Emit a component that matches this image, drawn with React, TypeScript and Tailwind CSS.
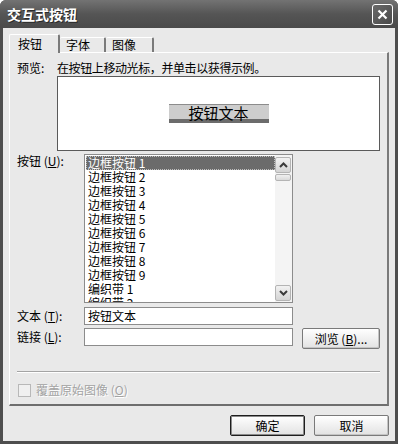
import React from "react"

const items = [
  "边框按钮 1",
  "边框按钮 2",
  "边框按钮 3",
  "边框按钮 4",
  "边框按钮 5",
  "边框按钮 6",
  "边框按钮 7",
  "边框按钮 8",
  "边框按钮 9",
  "编织带 1",
  "编织带 2",
]

function Key({ label, k }: { label: string; k: string }) {
  return (
    <span className="whitespace-nowrap">
      {label} (<span className="underline">{k}</span>):
    </span>
  )
}

function Arrow({ up }: { up?: boolean }) {
  return (
    <svg width="9" height="6" viewBox="0 0 9 6">
      <path d={up ? "M1 5 L4.5 1.5 L8 5" : "M1 1 L4.5 4.5 L8 1"} fill="none" stroke="#3a3a3a" strokeWidth="2" />
    </svg>
  )
}

export default function App() {
  return (
    <div
      className="w-[398px] h-[444px] bg-[#4e4e4e] flex flex-col rounded-t-[6px] overflow-hidden text-[12px] text-black"
      style={{ fontFamily: '"Noto Sans CJK SC", "Noto Sans", sans-serif' }}
    >
      {/* Title bar */}
      <div className="h-[28px] shrink-0 flex items-center justify-between pl-[7px] pr-[5px] bg-gradient-to-b from-[#737373] via-[#555555] to-[#4a4a4a]">
        <span className="text-white font-bold text-[14px] leading-none [text-shadow:1px_1px_0_#2a2a2a]">交互式按钮</span>
        <div className="w-[21px] h-[21px] border border-white rounded-[3px] bg-gradient-to-br from-[#6a6a6a] to-[#4a4a4a] flex items-center justify-center">
          <svg width="11" height="11" viewBox="0 0 11 11">
            <path d="M1.5 1.5 L9.5 9.5 M9.5 1.5 L1.5 9.5" stroke="white" strokeWidth="2.2" />
          </svg>
        </div>
      </div>

      {/* Body */}
      <div className="flex-1 mx-[3px] mb-[3px] bg-[#e9e9e9] px-[6px] pt-[6px] flex flex-col">
        {/* Tabs */}
        <div className="h-[18px] flex items-end leading-[14px]">
          <div className="relative z-10 h-[19px] w-[51px] -mb-[1px] bg-[#e9e9e9] border-l border-t border-white border-r-2 border-r-[#7a7a7a] rounded-t-[2px] pl-[8px] pt-[2px]">
            按钮
          </div>
          <div className="h-[15px] w-[46px] border-t border-white border-r-2 border-r-[#7a7a7a] rounded-t-[2px] pl-[6px] pt-0">
            字体
          </div>
          <div className="h-[15px] w-[48px] border-t border-white border-r-2 border-r-[#7a7a7a] rounded-t-[2px] pl-[6px] pt-0">
            图像
          </div>
        </div>

        {/* Panel */}
        <div className="h-[354px] border-l border-t border-white border-r-2 border-r-[#7a7a7a] border-b-2 border-b-[#6e6e6e] px-[7px] pt-[8px] flex flex-col leading-[14px]">
          <div className="flex">
            <span className="w-[40px] shrink-0">预览:</span>
            <span className="tracking-[-0.4px]">在按钮上移动光标，并单击以获得示例。</span>
          </div>
          <div className="ml-[40px] mt-[1px] h-[75px] bg-white border border-[#5a5a5a] flex items-center justify-center">
            <div className="w-[100px] h-[19px] bg-[#cdcdcd] border-t border-[#8c8c8c] border-b-[4px] border-b-[#6c6c6c] flex items-center justify-center text-[15px] leading-none">
              按钮文本
            </div>
          </div>

          {/* List row */}
          <div className="flex mt-[3px]">
            <div className="w-[67px] shrink-0 pt-0">
              <Key label="按钮" k="U" />
            </div>
            <div className="w-[209px] h-[149px] bg-white border border-[#8c8c8c] flex overflow-hidden">
              <div className="flex-1 pt-[1px] pl-[1px] flex flex-col">
                {items.map((it, i) => (
                  <div
                    key={it}
                    className={`h-[14px] shrink-0 pl-[2px] leading-[14px] whitespace-nowrap ${
                      i === 0 ? "bg-[#6b6b6b] text-white outline outline-1 outline-dotted outline-[#bdbdbd] -outline-offset-1" : ""
                    }`}
                  >
                    {it}
                  </div>
                ))}
              </div>
              <div className="w-[17px] shrink-0 bg-[#f4f4f4] flex flex-col pt-[2px] pb-[1px] pr-[1px]">
                <div className="h-[16px] rounded-[2px] border border-[#b4b4b4] bg-gradient-to-b from-[#f2f2f2] to-[#d4d4d4] flex items-center justify-center">
                  <Arrow up />
                </div>
                <div className="h-[7px] mt-[1px] rounded-[2px] border border-[#b4b4b4] bg-gradient-to-b from-[#f0f0f0] to-[#dadada]" />
                <div className="flex-1" />
                <div className="h-[16px] rounded-[2px] border border-[#b4b4b4] bg-gradient-to-b from-[#f2f2f2] to-[#d4d4d4] flex items-center justify-center">
                  <Arrow />
                </div>
              </div>
            </div>
          </div>

          {/* Text row */}
          <div className="flex items-center mt-[4px]">
            <div className="w-[67px] shrink-0">
              <Key label="文本" k="T" />
            </div>
            <div className="w-[209px] h-[18px] bg-white border border-[#8c8c8c] pl-[3px] leading-[16px]">按钮文本</div>
          </div>

          {/* Link row */}
          <div className="flex items-start mt-[3px]">
            <div className="w-[67px] shrink-0 pt-[2px]">
              <Key label="链接" k="L" />
            </div>
            <div className="w-[209px] h-[18px] bg-white border border-[#8c8c8c]" />
            <button className="ml-[9px] w-[78px] h-[21px] rounded-[2px] border border-[#7a7a7a] bg-gradient-to-b from-white to-[#e2e2e2] shadow-[inset_-1px_-1px_0_#c4c4c4] flex items-center justify-center leading-none">
              <span>
                浏览 (<span className="underline">B</span>)...
              </span>
            </button>
          </div>

          {/* Separator */}
          <div className="mt-[22px] h-[2px] border-t border-[#a4a4a4] border-b border-b-white" />

          {/* Checkbox row */}
          <div className="flex items-center mt-[10px] ml-[1px]">
            <div className="w-[13px] h-[13px] border border-[#b8b8b8] bg-[#f0f0f0]" />
            <span className="ml-[5px] text-[#a3a3a3] [text-shadow:1px_1px_0_#ffffff]">
              覆盖原始图像 (<span className="underline">O</span>)
            </span>
          </div>
        </div>

        {/* Bottom buttons */}
        <div className="flex justify-end gap-[9px] mt-[9px] leading-none">
          <button className="w-[75px] h-[21px] rounded-[2px] border border-[#1e1e1e] bg-gradient-to-b from-white to-[#e2e2e2] shadow-[inset_0_0_0_1px_#8a8a8a] flex items-center justify-center text-[12px]">
            确定
          </button>
          <button className="w-[75px] h-[21px] rounded-[2px] border border-[#7a7a7a] bg-gradient-to-b from-white to-[#e2e2e2] shadow-[inset_-1px_-1px_0_#c4c4c4] flex items-center justify-center text-[12px]">
            取消
          </button>
        </div>
      </div>
    </div>
  )
}
